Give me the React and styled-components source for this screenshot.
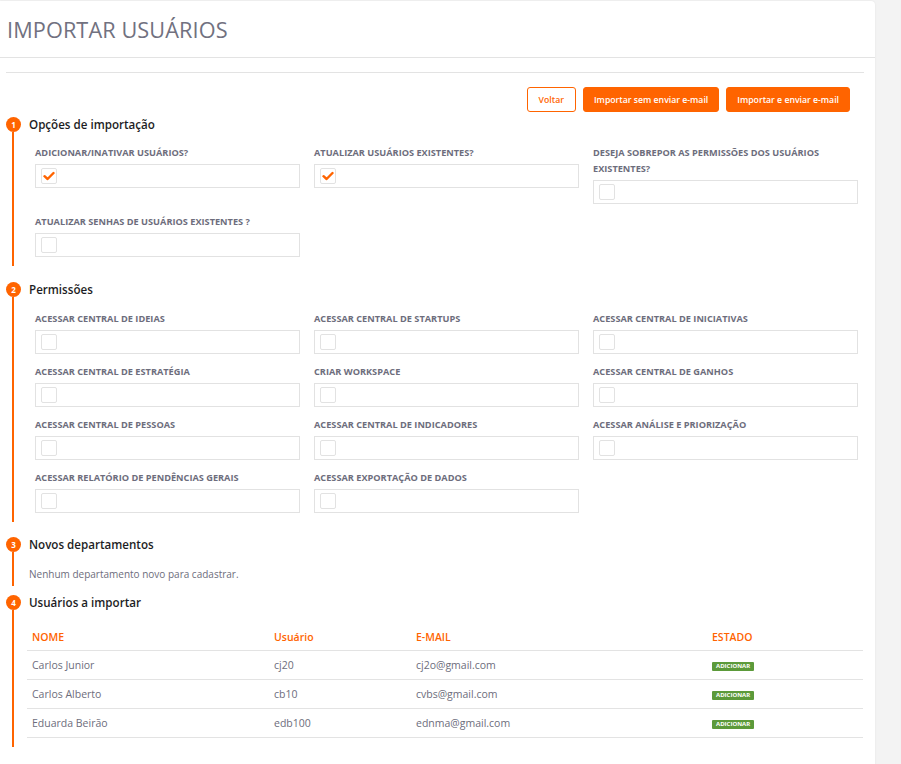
import React from 'react';
import styled, { createGlobalStyle } from 'styled-components';

const orange = '#ff6400';

const Global = createGlobalStyle`
  body {
    margin: 0;
    background: #f3f3f3;
    font-family: "Open Sans", "Liberation Sans", sans-serif;
  }
`;

const Page = styled.div`
  padding-top: 1px;
  width: 901px;
  height: 764px;
  overflow: hidden;
`;

const Card = styled.div`
  width: 875px;
  min-height: 780px;
  background: #fff;
  border-top-right-radius: 4px;
  box-shadow: 0 0 2px rgba(0,0,0,0.08);
`;

const Header = styled.div`
  height: 56px;
  border-bottom: 1px solid #e3e3e3;
  display: flex;
  align-items: center;
  padding-left: 7px;
`;

const Title = styled.h1`
  margin: 0;
  font-size: 21.7px;
  font-weight: 400;
  color: #717180;
  letter-spacing: 0.1px;
`;

const Body = styled.div`
  padding: 14px 11px 0 6px;
`;

const Rule = styled.div`
  border-top: 1px solid #e3e3e3;
`;

const Actions = styled.div`
  display: flex;
  justify-content: flex-end;
  gap: 7px;
  padding: 14px 14px 0 0;
`;

const Btn = styled.button`
  height: 25px;
  padding: 0 ${p => (p.$outline ? '11px' : '10px')};
  border-radius: 3px;
  border: 1px solid ${orange};
  background: ${p => (p.$outline ? '#fff' : orange)};
  color: ${p => (p.$outline ? orange : '#fff')};
  font-family: inherit;
  font-size: 8.7px;
  font-weight: 600;
  cursor: pointer;
`;

const Step = styled.section`
  margin-top: ${p => p.$top}px;
`;

const StepHead = styled.div`
  display: flex;
  align-items: center;
  height: 16px;
  gap: 8px;
`;

const Num = styled.span`
  width: 15px;
  height: 15px;
  border-radius: 50%;
  background: ${orange};
  color: #fff;
  font-size: 8px;
  font-weight: 700;
  display: flex;
  align-items: center;
  justify-content: center;
`;

const StepTitle = styled.h2`
  margin: 0;
  font-size: 11.6px;
  font-weight: 600;
  color: #1d1d24;
`;

const StepBody = styled.div`
  margin-left: 6px;
  border-left: 2px solid ${orange};
  padding: ${p => p.$pad || '13px 0 9px 21px'};
`;

const Grid = styled.div`
  display: grid;
  grid-template-columns: repeat(3, 265px);
  column-gap: 14px;
  row-gap: 10px;
  align-items: start;
`;

const Field = styled.div`
  display: flex;
  flex-direction: column;
`;

const Label = styled.label`
  font-size: 9.2px;
  font-weight: 700;
  color: #6d6d7c;
  line-height: 16px;
  margin-bottom: 3px;
  text-transform: uppercase;
`;

const Box = styled.div`
  height: 22px;
  border: 1px solid #e2e2e2;
  display: flex;
  align-items: center;
  padding-left: 5px;
`;

const Check = styled.span`
  width: 16px;
  height: 16px;
  box-sizing: border-box;
  border: 1px solid #e2e2e2;
  border-radius: 2px;
  display: flex;
  align-items: center;
  justify-content: center;
`;

const Note = styled.p`
  margin: 0;
  font-size: 10px;
  color: #6d6d7c;
`;

const Table = styled.table`
  width: 836px;
  border-collapse: collapse;
  margin-left: 1px;
`;

const Th = styled.th`
  text-align: left;
  color: ${orange};
  font-size: 10.5px;
  font-weight: 600;
  padding: 0 5px;
  height: 26px;
  border-bottom: 1px solid #e3e3e3;
  width: ${p => p.$w || 'auto'};
`;

const Td = styled.td`
  color: #6d6d7c;
  font-size: 10.5px;
  padding: 0 5px;
  height: 28px;
  border-bottom: 1px solid #e3e3e3;
`;

const Badge = styled.span`
  display: inline-block;
  background: #5c9a3a;
  color: #fff;
  font-size: 6px;
  font-weight: 700;
  padding: 1px 4px;
  border-radius: 1px;
  line-height: 7px;
  vertical-align: middle;
`;

const Tick = () => (
  <svg width="12" height="10" viewBox="0 0 12 10">
    <path d="M1.5 5.2 L4.6 8 L10.5 2" fill="none" stroke={orange} strokeWidth="2.4" strokeLinecap="round" strokeLinejoin="round" />
  </svg>
);

const options = [
  { label: 'Adicionar/inativar usuários?', checked: true },
  { label: 'Atualizar usuários existentes?', checked: true },
  { label: 'Deseja sobrepor as permissões dos usuários existentes?' },
  { label: 'Atualizar senhas de usuários existentes ?' },
];

const perms = [
  'Acessar central de ideias',
  'Acessar central de startups',
  'Acessar central de iniciativas',
  'Acessar central de estratégia',
  'Criar workspace',
  'Acessar central de ganhos',
  'Acessar central de pessoas',
  'Acessar central de indicadores',
  'Acessar análise e priorização',
  'Acessar relatório de pendências gerais',
  'Acessar exportação de dados',
];

const users = [
  { nome: 'Carlos Junior', user: 'cj20', email: 'cj2o@gmail.com' },
  { nome: 'Carlos Alberto', user: 'cb10', email: 'cvbs@gmail.com' },
  { nome: 'Eduarda Beirão', user: 'edb100', email: 'ednma@gmail.com' },
];

const CheckField = ({ label, checked }) => (
  <Field>
    <Label>{label}</Label>
    <Box>
      <Check>{checked && <Tick />}</Check>
    </Box>
  </Field>
);

export default function App() {
  return (
    <Page>
      <Global />
      <Card>
        <Header>
          <Title>IMPORTAR USUÁRIOS</Title>
        </Header>
        <Body>
          <Rule />
          <Actions>
            <Btn $outline>Voltar</Btn>
            <Btn>Importar sem enviar e-mail</Btn>
            <Btn>Importar e enviar e-mail</Btn>
          </Actions>

          <Step $top={4}>
            <StepHead><Num>1</Num><StepTitle>Opções de importação</StepTitle></StepHead>
            <StepBody>
              <Grid>
                {options.map(o => <CheckField key={o.label} {...o} />)}
              </Grid>
            </StepBody>
          </Step>

          <Step $top={15}>
            <StepHead><Num>2</Num><StepTitle>Permissões</StepTitle></StepHead>
            <StepBody $pad="14px 0 9px 21px">
              <Grid>
                {perms.map(p => <CheckField key={p} label={p} />)}
              </Grid>
            </StepBody>
          </Step>

          <Step $top={14}>
            <StepHead><Num>3</Num><StepTitle>Novos departamentos</StepTitle></StepHead>
            <StepBody $pad="15px 0 5px 15px">
              <Note>Nenhum departamento novo para cadastrar.</Note>
            </StepBody>
          </Step>

          <Step $top={8}>
            <StepHead><Num>4</Num><StepTitle>Usuários a importar</StepTitle></StepHead>
            <StepBody $pad="14px 0 9px 12px">
              <Table>
                <thead>
                  <tr>
                    <Th $w="232px">NOME</Th>
                    <Th $w="132px">Usuário</Th>
                    <Th $w="286px">E-MAIL</Th>
                    <Th>ESTADO</Th>
                  </tr>
                </thead>
                <tbody>
                  {users.map(u => (
                    <tr key={u.user}>
                      <Td>{u.nome}</Td>
                      <Td>{u.user}</Td>
                      <Td>{u.email}</Td>
                      <Td><Badge>ADICIONAR</Badge></Td>
                    </tr>
                  ))}
                </tbody>
              </Table>
            </StepBody>
          </Step>
        </Body>
      </Card>
    </Page>
  );
}
